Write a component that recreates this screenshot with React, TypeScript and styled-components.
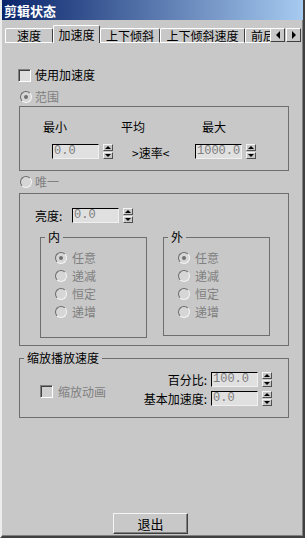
import styled, { createGlobalStyle } from "styled-components";

const GlobalStyle = createGlobalStyle`
  html, body {
    margin: 0;
    padding: 0;
    background: #c8c8c8;
  }
  body {
    font-family: "Noto Sans CJK SC", "Liberation Sans", sans-serif;
    font-size: 12px;
    line-height: 14px;
  }
`;

const Window = styled.div`
  width: 305px;
  height: 538px;
  box-sizing: border-box;
  display: flex;
  flex-direction: column;
  background: #c8c8c8;
  border-left: 2px solid #ececec;
  border-right: 2px solid #404040;
  border-bottom: 2px solid #404040;
  box-shadow: inset -1px -1px 0 #808080;
  overflow: hidden;
`;

const TitleBar = styled.div`
  flex: none;
  height: 20px;
  box-sizing: border-box;
  padding: 2px 0 0 2px;
  display: flex;
  align-items: center;
  background: linear-gradient(to right, #0a246a, #a6caf0);
  color: #fff;
  font-size: 13px;
  font-weight: bold;
  letter-spacing: 0;
`;

const TabStrip = styled.div`
  flex: none;
  height: 23px;
  display: flex;
  align-items: flex-end;
  padding-left: 3px;
`;

const TabList = styled.div`
  display: flex;
  align-items: flex-end;
  width: 265px;
  height: 100%;
  overflow: hidden;
`;

const Tab = styled.div<{ $w: number; $active?: boolean }>`
  flex: none;
  box-sizing: border-box;
  width: ${(p) => p.$w}px;
  height: ${(p) => (p.$active ? 18 : 15)}px;
  display: flex;
  align-items: center;
  justify-content: center;
  border: 1px solid #fff;
  border-right-color: #404040;
  border-bottom: ${(p) => (p.$active ? "none" : "1px solid #fff")};
  border-radius: 2px 2px 0 0;
  color: #000;
  line-height: 12px;
  white-space: nowrap;
`;

const ScrollButtons = styled.div`
  display: flex;
  gap: 1px;
  margin-bottom: 1px;
`;

const ScrollButton = styled.div<{ $dir: "left" | "right" }>`
  width: 15px;
  height: 14px;
  box-sizing: border-box;
  display: flex;
  align-items: center;
  justify-content: center;
  background: #c8c8c8;
  border: 1px solid;
  border-color: #fff #404040 #404040 #fff;
  &::after {
    content: "";
    width: 0;
    height: 0;
    border-top: 4px solid transparent;
    border-bottom: 4px solid transparent;
    ${(p) =>
      p.$dir === "left"
        ? "border-right: 4px solid #000;"
        : "border-left: 4px solid #000;"}
  }
`;

const Content = styled.div`
  display: flex;
  flex-direction: column;
  padding: 25px 14px 0 17px;
`;

const OptionRow = styled.div<{ $indent?: number; $mt?: number; $gap?: number; $h?: number }>`
  display: flex;
  align-items: center;
  height: ${(p) => p.$h ?? 14}px;
  margin-left: ${(p) => p.$indent ?? 0}px;
  margin-top: ${(p) => p.$mt ?? 0}px;
  gap: ${(p) => p.$gap ?? 4}px;
  white-space: nowrap;
`;

const Text = styled.span<{ $disabled?: boolean }>`
  color: ${(p) => (p.$disabled ? "#808080" : "#000")};
  line-height: 14px;
`;

const CheckBox = styled.span<{ $disabled?: boolean }>`
  flex: none;
  width: 13px;
  height: 13px;
  box-sizing: border-box;
  border: 1px solid;
  border-color: #808080 #fff #fff #808080;
  background: ${(p) => (p.$disabled ? "#cfcfcf" : "#dedede")};
  box-shadow: inset 1px 1px 0 #404040;
`;

const Radio = styled.span<{ $checked?: boolean }>`
  flex: none;
  width: 12px;
  height: 12px;
  box-sizing: border-box;
  border-radius: 50%;
  border: 1px solid;
  border-color: #6a6a6a #f4f4f4 #f4f4f4 #6a6a6a;
  background: #d6d6d6;
  display: flex;
  align-items: center;
  justify-content: center;
  &::after {
    content: "";
    display: ${(p) => (p.$checked ? "block" : "none")};
    width: 4px;
    height: 4px;
    border-radius: 50%;
    background: #707070;
  }
`;

const Frame = styled.div<{ $mt?: number; $pt: number; $pb: number }>`
  border: 1px solid #6e6e6e;
  margin-top: ${(p) => p.$mt ?? 0}px;
  padding: ${(p) => p.$pt}px 0 ${(p) => p.$pb}px 0;
  display: flex;
  flex-direction: column;
`;

const GroupBox = styled.fieldset<{ $mt?: number; $w?: number; $pt: number; $pb: number }>`
  margin: ${(p) => p.$mt ?? 0}px 0 0 0;
  padding: ${(p) => p.$pt}px 0 ${(p) => p.$pb}px 0;
  min-inline-size: 0;
  border: 1px solid #6e6e6e;
  box-sizing: border-box;
  ${(p) => (p.$w ? `width: ${p.$w}px; flex: none;` : "")}
`;

const Legend = styled.legend`
  margin-left: 4px;
  padding: 0 3px;
  line-height: 12px;
  color: #000;
`;

const LabelRow = styled.div`
  display: flex;
  padding-left: 23px;
  height: 14px;
  align-items: center;
`;

const ColLabel = styled.span<{ $w?: number }>`
  width: ${(p) => (p.$w ? `${p.$w}px` : "auto")};
  line-height: 14px;
  color: #000;
`;

const FieldRow = styled.div<{ $pl: number; $mt?: number }>`
  display: flex;
  align-items: center;
  height: 15px;
  padding-left: ${(p) => p.$pl}px;
  margin-top: ${(p) => p.$mt ?? 0}px;
`;

const Spin = styled.div<{ $ml?: number }>`
  display: flex;
  align-items: center;
  gap: 4px;
  margin-left: ${(p) => p.$ml ?? 0}px;
`;

const NumInput = styled.div`
  width: 47px;
  height: 15px;
  box-sizing: border-box;
  border: 1px solid;
  border-color: #000 #f0f0f0 #f0f0f0 #000;
  background: #e0e0e0;
  color: #7c7c7c;
  font-family: "Liberation Mono", "DejaVu Sans Mono", monospace;
  font-size: 12px;
  line-height: 13px;
  padding-left: 1px;
  overflow: hidden;
`;

const Spinner = styled.div`
  width: 10px;
  height: 15px;
  display: flex;
  flex-direction: column;
  gap: 1px;
`;

const SpinHalf = styled.div<{ $dir: "up" | "down" }>`
  flex: 1;
  box-sizing: border-box;
  border: 1px solid;
  border-color: #f4f4f4 #505050 #505050 #f4f4f4;
  background: #c8c8c8;
  display: flex;
  align-items: center;
  justify-content: center;
  &::after {
    content: "";
    width: 0;
    height: 0;
    border-left: 3px solid transparent;
    border-right: 3px solid transparent;
    ${(p) =>
      p.$dir === "up"
        ? "border-bottom: 3px solid #000;"
        : "border-top: 3px solid #000;"}
  }
`;

const RateText = styled.span<{ $ml: number }>`
  margin-left: ${(p) => p.$ml}px;
  width: 36px;
  line-height: 14px;
  margin-top: 2px;
  color: #000;
  white-space: nowrap;
`;

const BrightRow = styled.div`
  display: flex;
  align-items: center;
  height: 15px;
  padding-left: 15px;
`;

const FieldLabel = styled.span<{ $w?: number }>`
  width: ${(p) => (p.$w ? `${p.$w}px` : "auto")};
  line-height: 14px;
  color: #000;
  white-space: nowrap;
`;

const InnerGroups = styled.div`
  display: flex;
  align-items: flex-start;
  gap: 16px;
  padding-left: 20px;
  margin-top: 8px;
`;

const RadioList = styled.div`
  display: flex;
  flex-direction: column;
  padding-left: 14px;
`;

const ScaleBody = styled.div`
  display: flex;
  justify-content: space-between;
  padding: 0 16px 0 20px;
`;

const ScaleGrid = styled.div`
  display: grid;
  grid-template-columns: auto auto;
  column-gap: 4px;
  row-gap: 4px;
  align-items: center;
  justify-items: end;
`;

const Footer = styled.div`
  flex: 1;
  display: flex;
  align-items: flex-end;
  padding: 0 0 2px 111px;
`;

const Button = styled.div`
  width: 75px;
  height: 21px;
  box-sizing: border-box;
  display: flex;
  align-items: center;
  justify-content: center;
  border: 1px solid;
  border-color: #f4f4f4 #404040 #404040 #f4f4f4;
  box-shadow: inset -1px -1px 0 #808080;
  color: #000;
  font-size: 13px;
  line-height: 14px;
`;

function SpinBox({ value, ml }: { value: string; ml?: number }) {
  return (
    <Spin $ml={ml}>
      <NumInput>{value}</NumInput>
      <Spinner>
        <SpinHalf $dir="up" />
        <SpinHalf $dir="down" />
      </Spinner>
    </Spin>
  );
}

const modes = ["任意", "递减", "恒定", "递增"];

function ModeGroup({ title, pb }: { title: string; pb: number }) {
  return (
    <GroupBox $w={107} $pt={6} $pb={pb}>
      <Legend>{title}</Legend>
      <RadioList>
        {modes.map((m, i) => (
          <OptionRow key={m} $h={18} $gap={5}>
            <Radio $checked={i === 0} />
            <Text $disabled>{m}</Text>
          </OptionRow>
        ))}
      </RadioList>
    </GroupBox>
  );
}

export default function App() {
  return (
    <>
      <GlobalStyle />
      <Window>
        <TitleBar>剪辑状态</TitleBar>
        <TabStrip>
          <TabList>
            <Tab $w={48}>速度</Tab>
            <Tab $w={47} $active>
              加速度
            </Tab>
            <Tab $w={60}>上下倾斜</Tab>
            <Tab $w={85}>上下倾斜速度</Tab>
            <Tab $w={60}>前后倾斜</Tab>
          </TabList>
          <ScrollButtons>
            <ScrollButton $dir="left" />
            <ScrollButton $dir="right" />
          </ScrollButtons>
        </TabStrip>

        <Content>
          <OptionRow $indent={-1} $gap={4}>
            <CheckBox />
            <Text>使用加速度</Text>
          </OptionRow>

          <OptionRow $indent={1} $mt={8} $gap={3}>
            <Radio $checked />
            <Text $disabled>范围</Text>
          </OptionRow>

          <Frame $mt={2} $pt={13} $pb={11}>
            <LabelRow>
              <ColLabel $w={78}>最小</ColLabel>
              <ColLabel $w={81}>平均</ColLabel>
              <ColLabel>最大</ColLabel>
            </LabelRow>
            <FieldRow $pl={32} $mt={10}>
              <SpinBox value="0.0" />
              <RateText $ml={19}>&gt;速率&lt;</RateText>
              <SpinBox value="1000.0" ml={27} />
            </FieldRow>
          </Frame>

          <OptionRow $indent={1} $mt={4} $gap={3}>
            <Radio />
            <Text $disabled>唯一</Text>
          </OptionRow>

          <Frame $mt={4} $pt={14} $pb={7}>
            <BrightRow>
              <FieldLabel $w={37}>亮度:</FieldLabel>
              <SpinBox value="0.0" />
            </BrightRow>
            <InnerGroups>
              <ModeGroup title="内" pb={16} />
              <ModeGroup title="外" pb={14} />
            </InnerGroups>
          </Frame>

          <GroupBox $mt={6} $pt={8} $pb={11}>
            <Legend>缩放播放速度</Legend>
            <ScaleBody>
              <OptionRow $mt={13} $gap={5} $h={13}>
                <CheckBox $disabled />
                <Text $disabled>缩放动画</Text>
              </OptionRow>
              <ScaleGrid>
                <FieldLabel>百分比:</FieldLabel>
                <SpinBox value="100.0" />
                <FieldLabel>基本加速度:</FieldLabel>
                <SpinBox value="0.0" />
              </ScaleGrid>
            </ScaleBody>
          </GroupBox>
        </Content>

        <Footer>
          <Button>退出</Button>
        </Footer>
      </Window>
    </>
  );
}
